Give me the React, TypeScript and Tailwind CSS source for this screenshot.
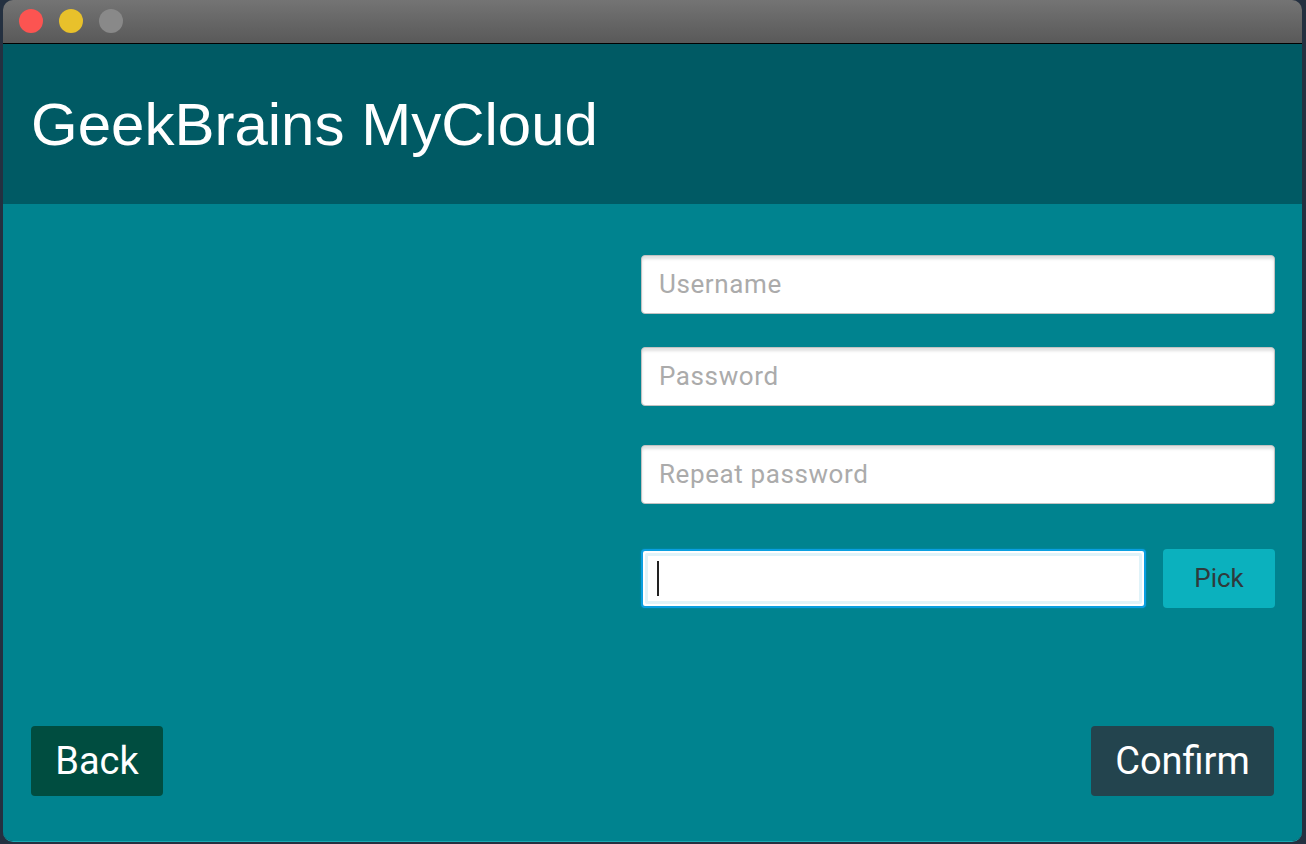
import React from "react";

function TextField({ placeholder, className = "" }: { placeholder: string; className?: string }) {
  return (
    <div
      className={`h-[59px] w-full rounded-[4px] border border-[#c2c2c2] bg-white shadow-[inset_0_3px_3px_rgba(0,0,0,0.12)] flex items-center pl-[17px] pb-[1px] ${className}`}
    >
      <span className="text-[26px] tracking-[0.6px] text-[#ababab] font-['Roboto',sans-serif] leading-none">
        {placeholder}
      </span>
    </div>
  );
}

export default function App() {
  return (
    <div className="w-[1306px] h-[844px] bg-[#243040] pl-[3px] pr-[4px] pb-[2px] flex">
      <div className="flex-1 flex flex-col rounded-[10px] overflow-hidden border-b border-[#1aa7b0]">
        {/* title bar */}
        <div className="h-[44px] shrink-0 bg-gradient-to-b from-[#747474] to-[#595959] border-b border-black flex items-center pl-[16px] gap-[16px] pb-[1px]">
          <div className="w-[24px] h-[24px] rounded-full bg-[#fc5451]" />
          <div className="w-[24px] h-[24px] rounded-full bg-[#e8c12b]" />
          <div className="w-[24px] h-[24px] rounded-full bg-[#898989]" />
        </div>
        {/* header */}
        <div className="h-[160px] shrink-0 bg-[#005a64] pl-[28px] pt-[51px]">
          <h1 className="text-[60px] leading-[60px] text-white font-['Liberation_Sans',Arial,sans-serif]">
            GeekBrains MyCloud
          </h1>
        </div>
        {/* body */}
        <div className="flex-1 bg-[#00838f] flex flex-col pl-[28px] pr-[27px] pb-[45px]">
          <div className="pt-[51px] pl-[610px] flex flex-col">
            <TextField placeholder="Username" />
            <TextField placeholder="Password" className="mt-[33px]" />
            <TextField placeholder="Repeat password" className="mt-[39px]" />
            <div className="mt-[45px] flex gap-[17px]">
              <div className="h-[59px] flex-1 rounded-[4px] border-2 border-[#0a9fe0] bg-white p-[2px] shadow-[0_0_2px_rgba(3,155,229,0.6)]">
                <div className="h-full w-full rounded-[2px] border-[3px] border-[#e0f3f9] bg-white flex items-center pl-[9px]">
                  <span className="block w-[2px] h-[35px] bg-[#222]" />
                </div>
              </div>
              <button className="h-[59px] w-[112px] rounded-[4px] bg-[#0bb1be] text-[#2f3a3c] text-[26px] font-['Roboto',sans-serif]">
                Pick
              </button>
            </div>
          </div>
          <div className="mt-auto flex justify-between mr-[1px]">
            <button className="h-[70px] w-[132px] rounded-[4px] bg-[#004d40] text-white text-[38px] font-['Roboto',sans-serif]">
              Back
            </button>
            <button className="h-[70px] w-[183px] rounded-[4px] bg-[#23444e] text-white text-[38px] font-['Roboto',sans-serif]">
              Confirm
            </button>
          </div>
        </div>
      </div>
    </div>
  );
}
